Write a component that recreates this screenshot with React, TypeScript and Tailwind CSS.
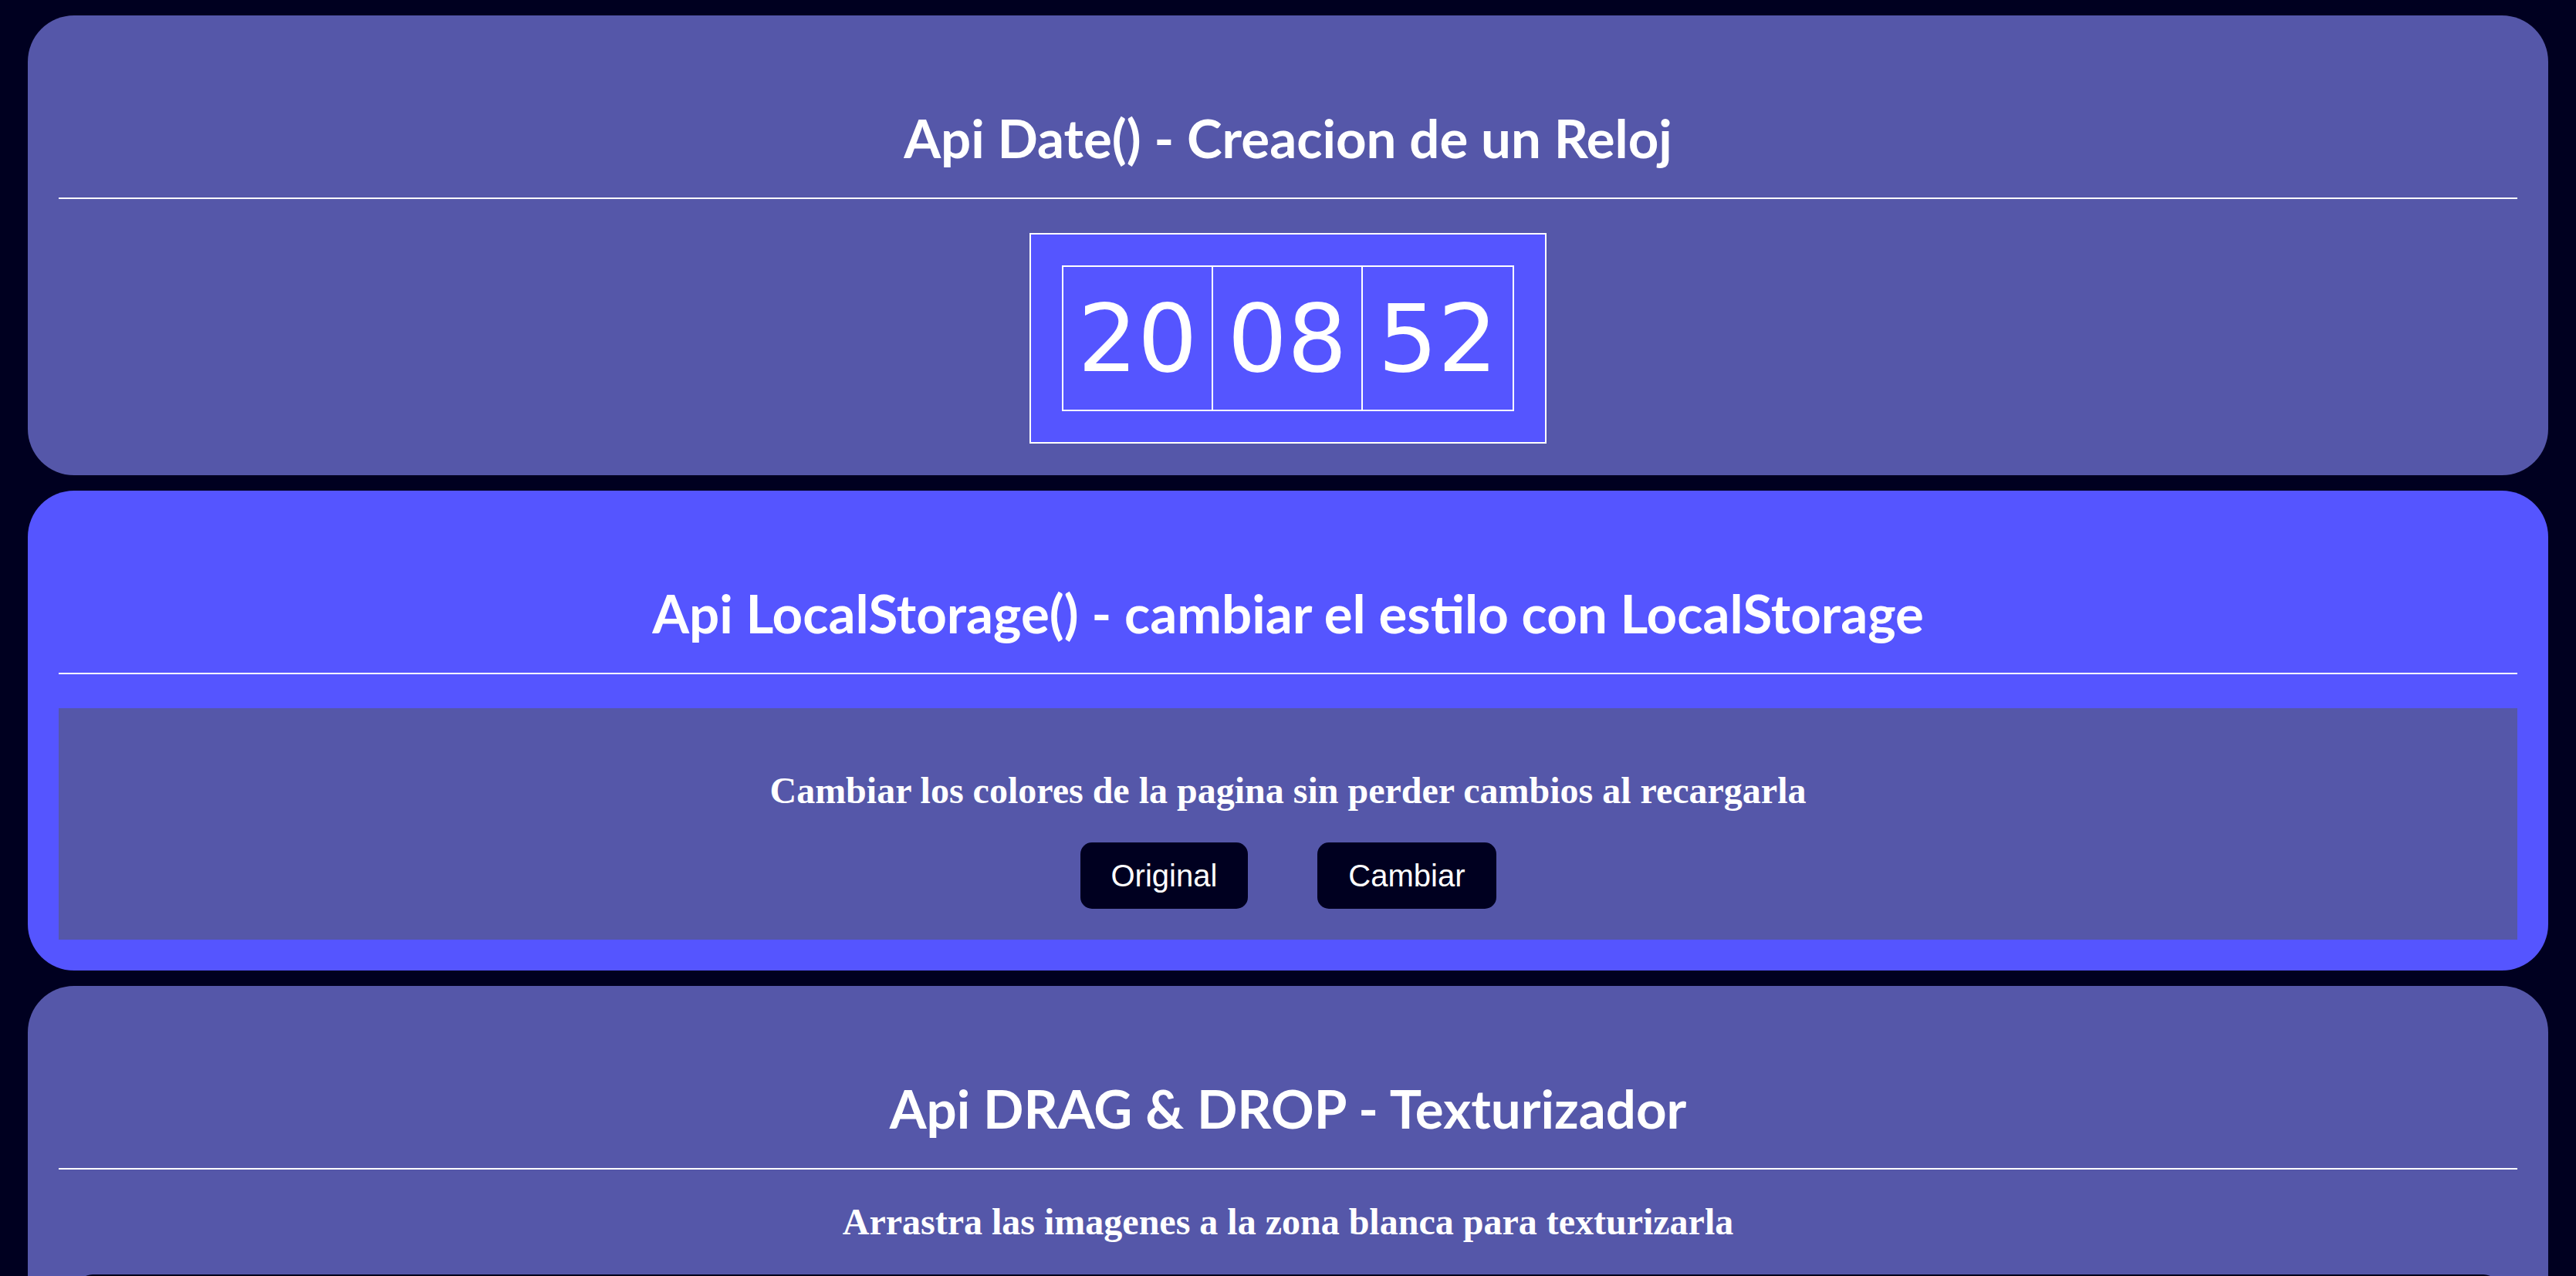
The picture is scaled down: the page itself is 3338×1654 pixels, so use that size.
import React from "react";

const titleFont = { fontFamily: "Lato, 'Open Sans', sans-serif" };

function Title({ children }: { children: React.ReactNode }) {
  return (
    <>
      <h1
        className="text-center text-white font-bold text-[69px] leading-[82px] m-0"
        style={titleFont}
      >
        {children}
      </h1>
      <div className="mt-[36px] h-[2px] bg-white" />
    </>
  );
}

export default function App() {
  return (
    <div className="min-h-screen bg-[#000020] px-[36px] pt-[20px] pb-[20px] flex flex-col gap-[20px]">
      {/* Card 1: Clock */}
      <section className="rounded-[60px] bg-[#5557a9] px-[40px] pt-[118px] pb-[41px]">
        <Title>Api Date() - Creacion de un Reloj</Title>
        <div className="mt-[44px] flex justify-center">
          <div className="border-2 border-white bg-[#5555ff] p-[40px]">
            <div className="flex border-2 border-white divide-x-2 divide-white">
              {["20", "08", "52"].map((d) => (
                <div
                  key={d}
                  className="w-[194px] h-[185px] flex items-center justify-center text-white text-[122px] leading-none"
                  style={{ fontFamily: "'DejaVu Sans', sans-serif" }}
                >
                  {d}
                </div>
              ))}
            </div>
          </div>
        </div>
      </section>

      {/* Card 2: LocalStorage */}
      <section className="rounded-[60px] bg-[#5555ff] px-[40px] pt-[118px] pb-[40px]">
        <Title>Api LocalStorage() - cambiar el estilo con LocalStorage</Title>
        <div className="mt-[44px] bg-[#5557a9] pt-[80px] pb-[40px] flex flex-col items-center">
          <h3
            className="text-white font-bold text-[48px] leading-[53px] m-0 text-center"
            style={{ fontFamily: "'Liberation Serif', 'Times New Roman', serif" }}
          >
            Cambiar los colores de la pagina sin perder cambios al recargarla
          </h3>
          <div className="mt-[41px] flex gap-[90px]">
            {["Original", "Cambiar"].map((b) => (
              <button
                key={b}
                className="h-[86px] px-[40px] rounded-[15px] bg-[#000020] text-white text-[40px] leading-none"
                style={{ fontFamily: "'Liberation Sans', Arial, sans-serif" }}
              >
                {b}
              </button>
            ))}
          </div>
        </div>
      </section>

      {/* Card 3: Drag & Drop */}
      <section className="rounded-[60px] bg-[#5557a9] px-[40px] pt-[118px] pb-[40px]">
        <Title>Api DRAG &amp; DROP - Texturizador</Title>
        <h2
          className="mt-[41px] text-white font-bold text-[48px] leading-[53px] m-0 text-center"
          style={{ fontFamily: "'Liberation Serif', 'Times New Roman', serif" }}
        >
          Arrastra las imagenes a la zona blanca para texturizarla
        </h2>
        <div className="mt-[42px] mx-[24px] h-[400px] rounded-[20px] bg-[#00001a]" />
      </section>
    </div>
  );
}
